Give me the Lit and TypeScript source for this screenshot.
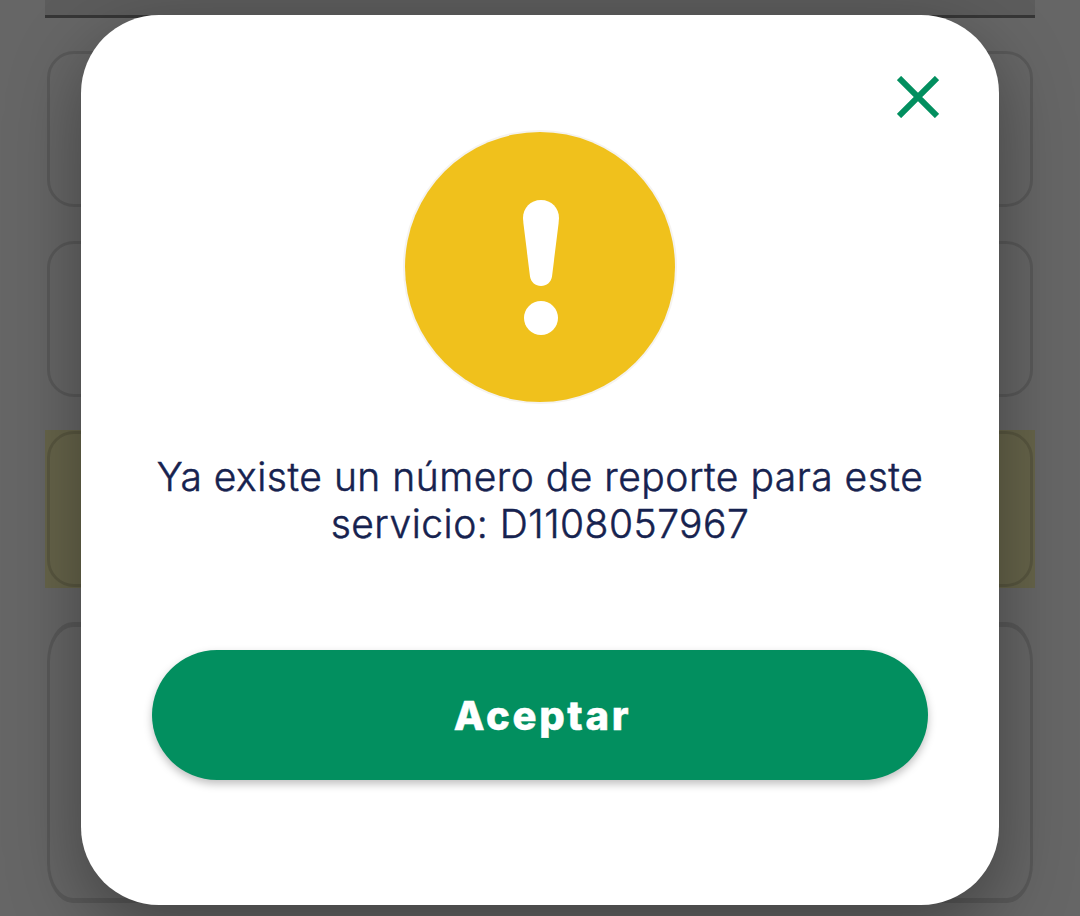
import { css, html, LitElement } from "lit";
import { customElement, property } from "lit/decorators.js";

@customElement("report-form")
export class ReportForm extends LitElement {
  static styles = css`
    :host {
      display: block;
    }

    * {
      box-sizing: border-box;
    }

    .form {
      display: flex;
      flex-direction: column;
      gap: 32px;
      padding: 0 45px;
    }

    .form-header {
      height: 18px;
      background: #e6e6e6;
      border-bottom: 3px solid #878787;
    }

    .field {
      height: 158px;
      padding: 1px 2px;
    }

    .field.highlighted {
      background: #fffab9;
    }

    .field-box {
      height: 100%;
      border: 3px solid rgba(0, 0, 0, 0.13);
      border-radius: 27px;
    }

    .field.textarea {
      height: 283px;
      padding: 2px 2px 0;
    }

    .field.textarea .field-box {
      border-width: 5px 3px;
      border-radius: 26px / 40px;
    }
  `;

  render() {
    return html`
      <div class="form">
        <div class="form-header"></div>
        <div class="field"><div class="field-box"></div></div>
        <div class="field"><div class="field-box"></div></div>
        <div class="field highlighted"><div class="field-box"></div></div>
        <div class="field textarea"><div class="field-box"></div></div>
      </div>
    `;
  }
}

@customElement("alert-dialog")
export class AlertDialog extends LitElement {
  @property()
  message = "";

  @property()
  action = "";

  static styles = css`
    :host {
      display: block;
      width: 918px;
      height: 890px;
    }

    * {
      margin: 0;
      padding: 0;
      box-sizing: border-box;
    }

    .dialog {
      display: flex;
      flex-direction: column;
      align-items: center;
      height: 100%;
      padding: 61px 60px 0;
      background: #fff;
      border-radius: 78px;
      box-shadow: 0 24px 72px rgba(0, 0, 0, 0.35);
    }

    button {
      border: none;
      font: inherit;
      cursor: pointer;
    }

    svg {
      display: block;
    }

    .close {
      align-self: flex-end;
      height: 42px;
      background: none;
    }

    .icon {
      margin-top: 11px;
    }

    .message {
      width: 800px;
      margin-top: 48px;
      color: #16224f;
      font-size: 39px;
      font-weight: 300;
      line-height: 47px;
      letter-spacing: 0.5px;
      text-align: center;
      -webkit-text-stroke: 0.5px #16224f;
    }

    .accept {
      width: 776px;
      height: 130px;
      margin-top: 103px;
      padding-left: 5px;
      color: #fff;
      background: #028f5f;
      border-radius: 65px;
      box-shadow: 0 4px 8px rgba(0, 0, 0, 0.25);
      font-size: 40px;
      font-weight: 800;
      letter-spacing: 2.7px;
      -webkit-text-stroke: 0.5px #fff;
    }
  `;

  render() {
    return html`
      <div class="dialog" role="alertdialog">
        <button class="close" aria-label="Cerrar">
          <svg width="42" height="42" viewBox="0 0 42 42">
            <path d="M2 2L40 40M40 2L2 40" stroke="#028f5f" stroke-width="6" />
          </svg>
        </button>
        <svg class="icon" width="276" height="276" viewBox="0 0 276 276">
          <circle cx="138" cy="138" r="137" fill="#f5f3f0" />
          <circle cx="138" cy="138" r="135" fill="#f0c11c" />
          <path
            d="M139 71c10.500 0 18 8 18 18l-.4 5L150 147.500c-1 5.800-5.400 9.500-11 9.500s-10-3.700-11-9.500L121.400 94l-.4-5c0-10 7.500-18 18-18z"
            fill="#fff"
          />
          <circle cx="139" cy="189" r="17" fill="#fff" />
        </svg>
        <p class="message">${this.message}</p>
        <button class="accept">${this.action}</button>
      </div>
    `;
  }
}

@customElement("app-root")
export class AppRoot extends LitElement {
  static styles = css`
    :host {
      display: block;
      position: relative;
      height: 916px;
      overflow: hidden;
      background: #fff;
      font-family: Inter, "Liberation Sans", sans-serif;
    }

    .overlay {
      position: absolute;
      inset: 0;
      display: flex;
      justify-content: center;
      align-items: flex-start;
      padding-top: 15px;
      background: rgba(0, 0, 0, 0.6);
    }
  `;

  render() {
    return html`
      <report-form></report-form>
      <div class="overlay">
        <alert-dialog
          message="Ya existe un número de reporte para este servicio: D1108057967"
          action="Aceptar"
        ></alert-dialog>
      </div>
    `;
  }
}
